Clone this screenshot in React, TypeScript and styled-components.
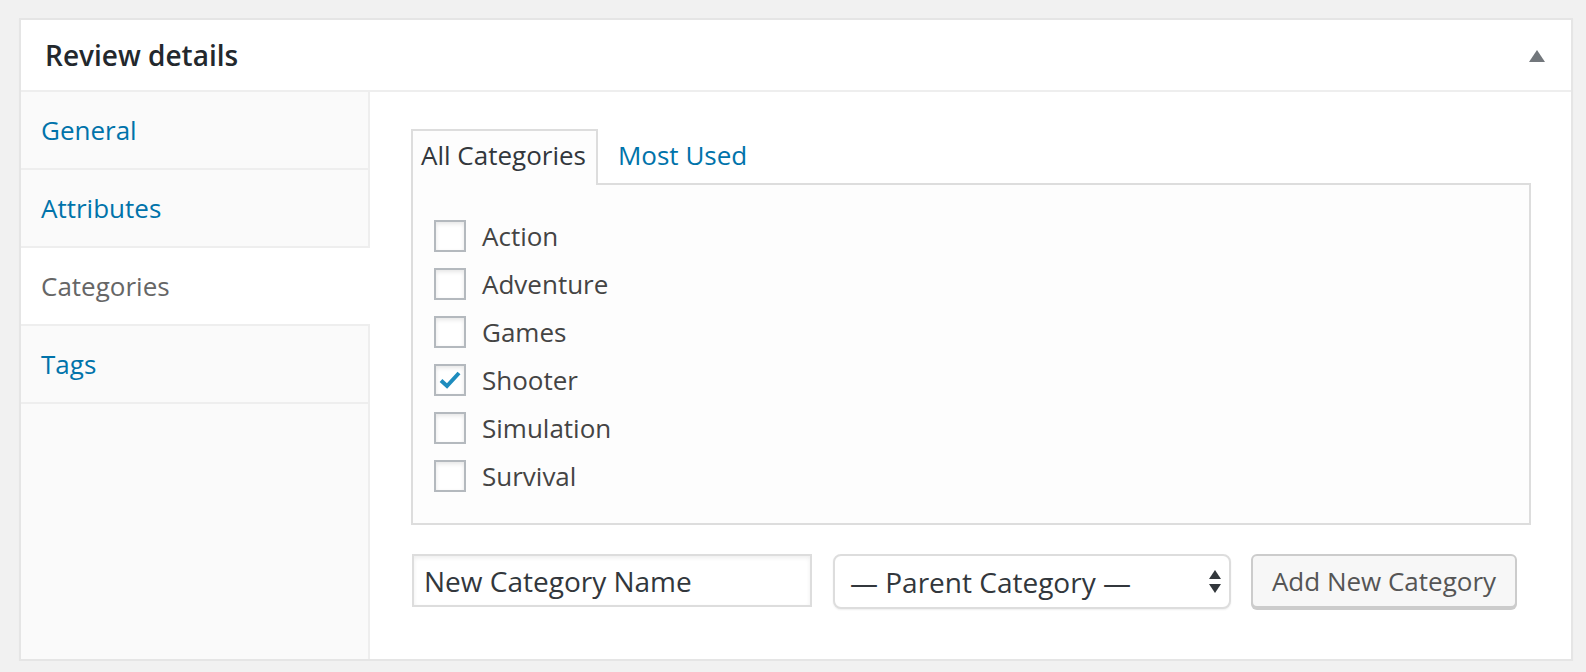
import React from "react";
import styled, { createGlobalStyle } from "styled-components";

const GlobalStyle = createGlobalStyle`
  html, body {
    margin: 0;
    padding: 0;
    background: #f1f1f1;
    font-family: "Open Sans", "Noto Sans", sans-serif;
  }
  * { box-sizing: border-box; }
`;

const Page = styled.div`
  padding: 18px 13px 0 19px;
`;

const Postbox = styled.div`
  width: 1554px;
  background: #fff;
  border: 2px solid #e5e5e5;
  box-shadow: 0 1px 1px rgba(0, 0, 0, 0.04);
`;

const Header = styled.div`
  height: 72px;
  border-bottom: 2px solid #eee;
  display: flex;
  align-items: center;
  justify-content: space-between;
  padding: 0 26px 0 24px;
`;

const Title = styled.h2`
  margin: 0;
  font-size: 28px;
  font-weight: 600;
  color: #23282d;
`;

const Toggle = styled.span`
  width: 0;
  height: 0;
  border-left: 8px solid transparent;
  border-right: 8px solid transparent;
  border-bottom: 12px solid #72777c;
  margin-top: 2px;
`;

const Body = styled.div`
  display: flex;
`;

const Sidebar = styled.ul`
  list-style: none;
  margin: 0;
  padding: 0;
  width: 349px;
  flex-shrink: 0;
  background: #fafafa;
  border-right: 2px solid #eee;
  display: flex;
  flex-direction: column;
`;

const SideItem = styled.li<{ active?: boolean }>`
  height: 78px;
  border-bottom: 2px solid #eee;
  padding-left: 20px;
  display: flex;
  align-items: center;
  font-size: 26px;
  color: ${p => (p.active ? "#666" : "#0073aa")};
  background: ${p => (p.active ? "#fff" : "transparent")};
  margin-right: ${p => (p.active ? "-2px" : "0")};
`;

const Content = styled.div`
  flex: 1;
  padding: 37px 40px 50px 41px;
`;

const Tabs = styled.ul`
  list-style: none;
  margin: 0;
  padding: 0;
  display: flex;
  align-items: flex-end;
`;

const Tab = styled.li<{ active?: boolean }>`
  position: relative;
  z-index: 1;
  margin-bottom: -2px;
  padding: 6px 10px 12px 8px;
  font-size: 26px;
  line-height: 36px;
  border: 2px solid ${p => (p.active ? "#ddd" : "transparent")};
  border-bottom: none;
  background: ${p => (p.active ? "#fdfdfd" : "transparent")};
  color: ${p => (p.active ? "#32373c" : "#0073aa")};
  & + & {
    margin-left: 10px;
  }
`;

const Panel = styled.div`
  border: 2px solid #ddd;
  background: #fdfdfd;
  padding: 35px 21px 31px;
  display: flex;
  flex-direction: column;
  gap: 16px;
`;

const CheckRow = styled.label`
  display: flex;
  align-items: center;
  height: 32px;
  font-size: 26px;
  color: #444;
`;

const Box = styled.span`
  width: 32px;
  height: 32px;
  flex-shrink: 0;
  border: 2px solid #b4b9be;
  background: #fff;
  box-shadow: inset 0 2px 4px rgba(0, 0, 0, 0.1);
  margin-right: 16px;
  display: flex;
  align-items: center;
  justify-content: center;
`;

const Form = styled.div`
  margin-top: 29px;
  display: flex;
  align-items: flex-start;
`;

const TextInput = styled.div`
  margin-left: 1px;
  width: 400px;
  height: 53px;
  border: 2px solid #ddd;
  box-shadow: inset 0 2px 4px rgba(0, 0, 0, 0.07);
  background: #fff;
  padding-left: 10px;
  display: flex;
  align-items: center;
  font-size: 28px;
  color: #32373c;
`;

const Select = styled.div`
  margin-left: 21px;
  width: 398px;
  height: 55px;
  border: 2px solid #ddd;
  border-radius: 8px;
  background: #fff;
  box-shadow: 0 1px 2px rgba(0, 0, 0, 0.07);
  padding: 0 8px 0 15px;
  display: flex;
  align-items: center;
  justify-content: space-between;
  font-size: 28px;
  color: #32373c;
`;

const Button = styled.div`
  margin-left: 20px;
  width: 266px;
  height: 54px;
  border: 2px solid #ccc;
  border-radius: 6px;
  background: #f7f7f7;
  box-shadow: 0 2px 0 #ccc;
  display: flex;
  align-items: center;
  justify-content: center;
  font-size: 26px;
  color: #555;
`;

const categories = [
  { name: "Action", checked: false },
  { name: "Adventure", checked: false },
  { name: "Games", checked: false },
  { name: "Shooter", checked: true },
  { name: "Simulation", checked: false },
  { name: "Survival", checked: false },
];

const sideTabs = ["General", "Attributes", "Categories", "Tags"];

const Check = () => (
  <svg width="24" height="24" viewBox="0 0 24 24">
    <path d="M3 12.5 L9 18 L21 5" fill="none" stroke="#1e8cbe" strokeWidth="4" />
  </svg>
);

const Arrows = () => (
  <svg width="12" height="24" viewBox="0 0 12 24">
    <path d="M6 0 L12 9 L0 9 Z" fill="#32373c" />
    <path d="M0 14 L12 14 L6 23 Z" fill="#32373c" />
  </svg>
);

const App: React.FC = () => (
  <Page>
    <GlobalStyle />
    <Postbox>
      <Header>
        <Title>Review details</Title>
        <Toggle />
      </Header>
      <Body>
        <Sidebar>
          {sideTabs.map(t => (
            <SideItem key={t} active={t === "Categories"}>
              {t}
            </SideItem>
          ))}
        </Sidebar>
        <Content>
          <Tabs>
            <Tab active>All Categories</Tab>
            <Tab>Most Used</Tab>
          </Tabs>
          <Panel>
            {categories.map(c => (
              <CheckRow key={c.name}>
                <Box>{c.checked && <Check />}</Box>
                {c.name}
              </CheckRow>
            ))}
          </Panel>
          <Form>
            <TextInput>New Category Name</TextInput>
            <Select>
              <span>— Parent Category —</span>
              <Arrows />
            </Select>
            <Button>Add New Category</Button>
          </Form>
        </Content>
      </Body>
    </Postbox>
  </Page>
);

export default App;
